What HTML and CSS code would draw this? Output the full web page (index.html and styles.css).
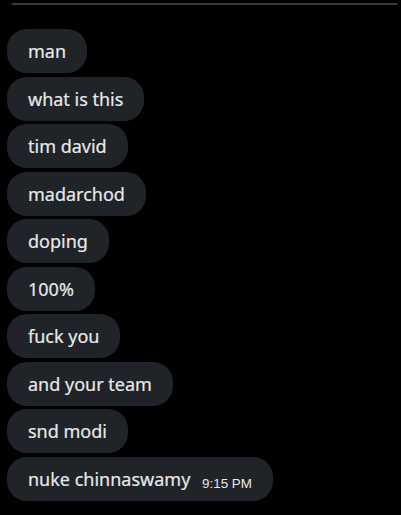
FILE: index.html
```html
<!DOCTYPE html>
<html lang="en">
<head>
    <title>Chat</title>
    <link rel="stylesheet" href="styles.css">
</head>
<body>
    <div class="top-line"></div>
    <div class="messages">
        <div class="bubble">man</div>
        <div class="bubble">what is this</div>
        <div class="bubble">tim david</div>
        <div class="bubble">madarchod</div>
        <div class="bubble">doping</div>
        <div class="bubble">100%</div>
        <div class="bubble">fuck you</div>
        <div class="bubble">and your team</div>
        <div class="bubble">snd modi</div>
        <div class="bubble">nuke chinnaswamy <span class="time">9:15 PM</span></div>
    </div>
</body>
</html>
```
FILE: styles.css
```css
body{
    margin: 0;
    background-color: #000000;
    font-family: "Noto Sans", Arial, sans-serif;
    color: #e7e9ea;
    width: 401px;
    height: 515px;
    overflow: hidden;
}
.top-line{
    height: 2px;
    background-color: #3a3b3e;
    margin-top: 3px;
    margin-left: 12px;
    margin-right: 4px;
}
.messages{
    display: flex;
    flex-direction: column;
    align-items: flex-start;
    row-gap: 3.5px;
    padding-top: 24px;
    padding-left: 7px;
}
.bubble{
    background-color: #202327;
    border-radius: 20px;
    padding: 11px 21px;
    font-size: 18px;
    line-height: 22px;
    height: 22px;
    -webkit-text-stroke: 0.2px #e7e9ea;
}
.time{
    font-family: "Liberation Sans", Arial, sans-serif;
    font-size: 13.4px;
    margin-left: 7px;
    vertical-align: -2px;
    -webkit-text-stroke: 0;
}
```
